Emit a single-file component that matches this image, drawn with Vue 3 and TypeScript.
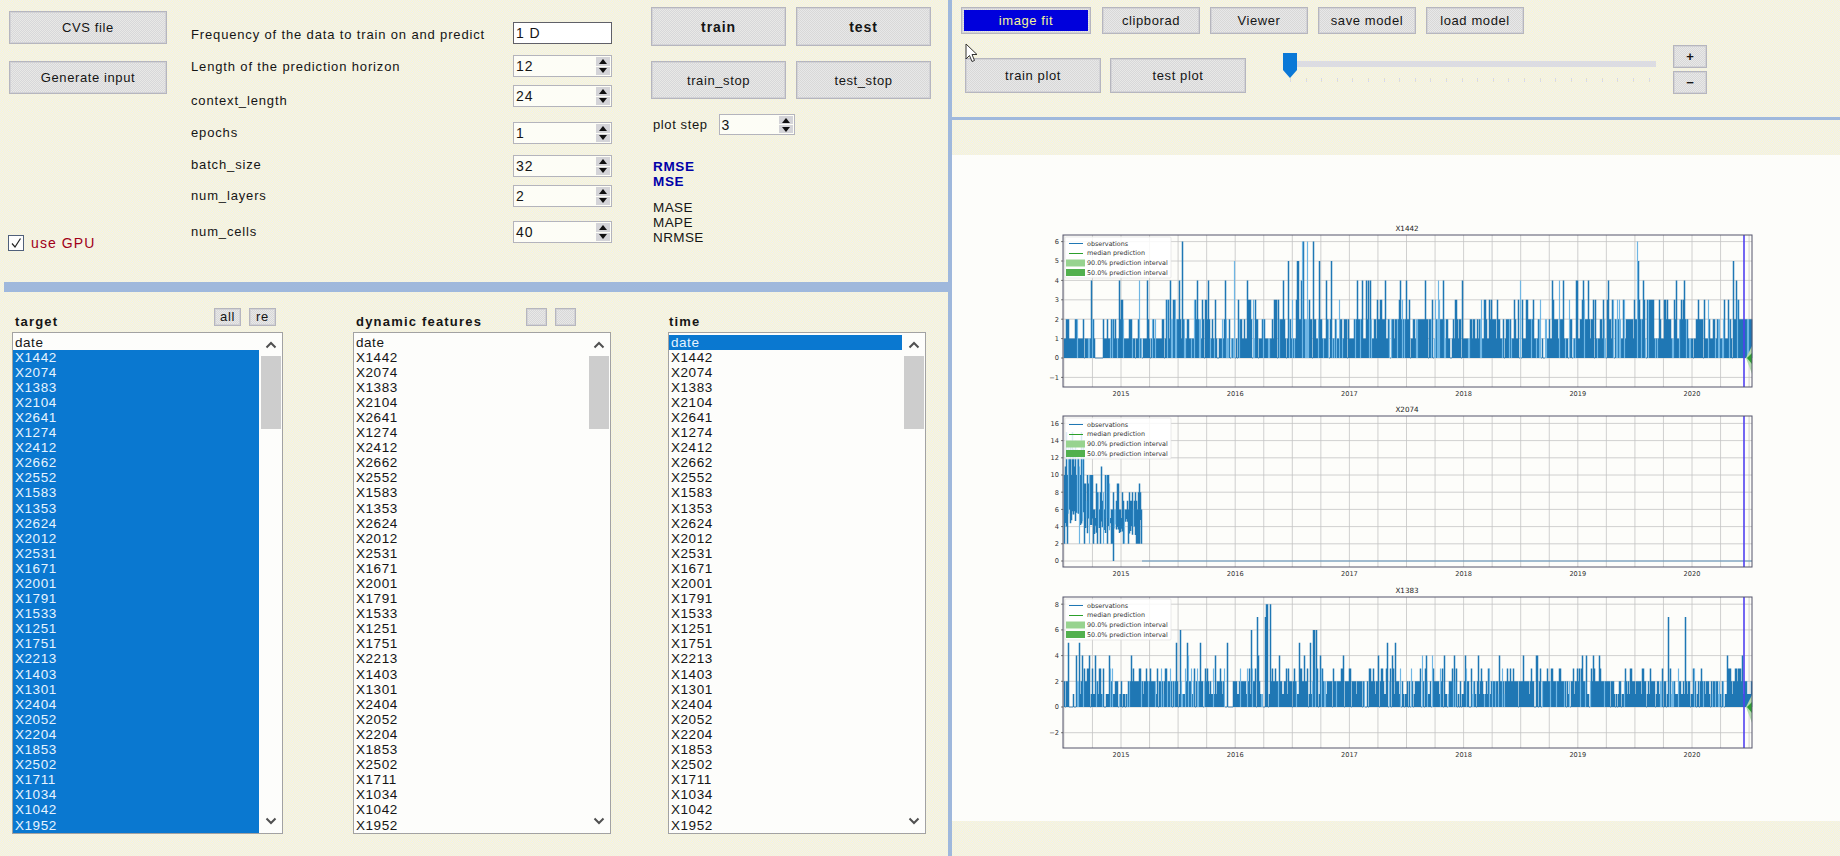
<script setup lang="ts">
interface Param { label: string; value: string; height: number; offset: number; spin: boolean }
const params: Param[] = [
  { label: 'Frequency of the data to train on and predict', value: '1 D', height: 33, offset: 5, spin: false },
  { label: 'Length of the prediction horizon', value: '12', height: 30, offset: 4, spin: true },
  { label: 'context_length', value: '24', height: 37, offset: 8, spin: true },
  { label: 'epochs', value: '1', height: 33, offset: 3, spin: true },
  { label: 'batch_size', value: '32', height: 30, offset: 2, spin: true },
  { label: 'num_layers', value: '2', height: 36, offset: 3, spin: true },
  { label: 'num_cells', value: '40', height: 22, offset: 3, spin: true },
]
const names = ['date','X1442','X2074','X1383','X2104','X2641','X1274','X2412','X2662','X2552','X1583','X1353','X2624','X2012','X2531','X1671','X2001','X1791','X1533','X1251','X1751','X2213','X1403','X1301','X2404','X2052','X2204','X1853','X2502','X1711','X1034','X1042','X1952']
const lists = [
  { key: 'target', title: 'target', cls: 'col-target', selected: names.slice(1), heads: ['all', 're'] },
  { key: 'dyn', title: 'dynamic features', cls: 'col-dyn', selected: [] as string[], heads: ['', ''] },
  { key: 'time', title: 'time', cls: 'col-time', selected: ['date'], heads: [] as string[] },
]

function rng(seed: number) {
  let a = seed
  return () => {
    a |= 0; a = (a + 0x6d2b79f5) | 0
    let t = Math.imul(a ^ (a >>> 15), 1 | a)
    t = (t + Math.imul(t ^ (t >>> 7), 61 | t)) ^ t
    return ((t ^ (t >>> 14)) >>> 0) / 4294967296
  }
}
const X0 = 1063, X1 = 1752, BLUE = 1744
const gridX: number[] = []
for (let x = 1121 - 28.55 * 2; x < X1; x += 28.55) if (x > X0) gridX.push(x)
const years = [2015, 2016, 2017, 2018, 2019, 2020].map((y, i) => ({ y, x: 1121 + i * 114.2 }))

interface Chart { title: string; top: number; bottom: number; ticks: { v: number; y: number }[]; zero: number; unit: number; dark: string; light: string; gaps: string; fan: string; fanB: string }
function build(title: string, top: number, bottom: number, zero: number, unit: number, tv: number[], values: (x: number, r: () => number) => number, seed: number, floor?: (x: number, r: () => number) => number): Chart {
  const r = rng(seed)
  let dark = '', light = '', gaps = ''
  let prev = 0
  for (let x = X0 + 1; x < X1; x++) {
    let v = values(x, r)
    if (!floor && v > 0) {
      if (v < 2 && prev >= 2 && r() < 0.55) v = 2
      else if (v < 3 && prev >= 3 && r() < 0.3) v = 3
    }
    prev = v
    const y = (zero - v * unit).toFixed(1)
    const lo = floor ? floor(x, r) : 0
    const seg = `M${x + 0.5} ${(zero - lo * unit).toFixed(1)}V${y}`
    if (v <= 0) gaps += `M${x} ${zero}H${x + 1}`
    else if (r() < 0.16) light += seg
    else dark += seg
  }
  const fan = `M${BLUE + 2} ${zero}L${X1} ${zero - 12}V${zero + 16}Z`
  const fanB = `M${BLUE + 3} ${zero}L${X1} ${zero - 5}V${zero + 6}Z`
  return { title, top, bottom, zero, unit, dark, light, gaps, fan, fanB, ticks: tv.map(v => ({ v, y: zero - v * unit })) }
}
function level(r: () => number, env: number) {
  const p = r()
  if (p < 0.07) return 0
  if (p < 1 - 0.4 * env) return 1
  if (p < 1 - 0.13 * env) return 2
  if (p < 1 - 0.045 * env) return 3
  return 4
}
const peaks1: Record<number, number> = { 1182: 6, 1302: 6, 1303: 6, 1307: 6, 1313: 6, 1637: 6, 1234: 5, 1288: 5, 1297: 5, 1298: 5, 1319: 5, 1331: 5, 1733: 5, 1638: 5 }
const c1 = build('X1442', 235, 387, 358, 19.4, [-1, 0, 1, 2, 3, 4, 5, 6], (x, r) => {
  if (peaks1[x]) return peaks1[x]
  if (x >= 1095 && x <= 1102) return 0
  return Math.min(4, level(r, x > 1165 ? 1.1 : 0.6))
}, 11)
const c2 = build('X2074', 416, 567, 561, 8.6, [0, 2, 4, 6, 8, 10, 12, 14, 16], (x, r) => {
  if (x > 1141) return 0
  const base = x < 1085 ? 9 : 5
  const top = x < 1085 ? 15 : x < 1110 ? 11.5 : 9.5
  return Math.round(base + r() * (top - base))
}, 23, (x, r) => {
  if (x > 1141) return 0
  const p = r()
  if (p < 0.05) return 0
  if (p < 0.2) return 2
  return x < 1085 ? 4 + r() * 2 : 3 + r() * 2
})
const peaks3: Record<number, number> = { 1266: 8, 1267: 8, 1270: 8, 1257: 7, 1265: 7, 1180: 6, 1251: 6, 1313: 6, 1314: 6, 1316: 6, 1668: 7, 1685: 7, 1068: 5, 1079: 5, 1176: 5, 1187: 5, 1200: 5, 1227: 5, 1299: 5, 1310: 5, 1387: 5, 1395: 5 }
const c3 = build('X1383', 597, 748, 707, 12.85, [-2, 0, 2, 4, 6, 8], (x, r) => {
  if (peaks3[x]) return peaks3[x]
  if (x >= 1225 && x <= 1232) return 0
  if (x >= 1069 && x <= 1075) return r() < 0.3 ? 1 : 0
  const p = r()
  if (p < 0.1) return 0
  if (p < 0.42) return 1
  if (p < 0.8) return 2
  if (p < 0.95) return 3
  return 4
}, 37)
const charts = [c1, c2, c3]
const legendRows = ['observations', 'median prediction', '90.0% prediction interval', '50.0% prediction interval']
const ticks = Array.from({ length: 24 }, (_, i) => i)
</script>

<template>
  <div class="app">
    <section class="left">
      <div class="left-top">
        <div class="file-col">
          <button class="btn file-btn">CVS file</button>
          <button class="btn file-btn">Generate input</button>
          <label class="gpu"><span class="check"><svg width="12" height="12" viewBox="0 0 12 12"><path d="M2 6.5 L5 10 L10.5 1.5" fill="none" stroke="#222" stroke-width="1.2"/></svg></span>use GPU</label>
        </div>
        <div class="params">
          <template v-for="p in params" :key="p.label">
            <div class="param-label" :style="{ marginTop: p.offset + 'px' }">{{ p.label }}</div>
            <div class="param-cell" :style="{ height: p.height + 'px' }">
              <div class="field" :class="{ plain: !p.spin }">
                <span class="field-text">{{ p.value }}</span>
                <span v-if="p.spin" class="spin">
                  <i class="sb"><b class="up"></b></i>
                  <i class="sb"><b class="down"></b></i>
                </span>
              </div>
            </div>
          </template>
        </div>
        <div class="run-col">
          <div class="run-grid">
            <button class="btn big strong">train</button>
            <button class="btn big strong">test</button>
            <button class="btn big">train_stop</button>
            <button class="btn big">test_stop</button>
          </div>
          <div class="plot-step">
            <span>plot step</span>
            <div class="field small">
              <span class="field-text">3</span>
              <span class="spin"><i class="sb"><b class="up"></b></i><i class="sb"><b class="down"></b></i></span>
            </div>
          </div>
          <div class="metrics blue"><div>RMSE</div><div>MSE</div></div>
          <div class="metrics"><div>MASE</div><div>MAPE</div><div>NRMSE</div></div>
        </div>
      </div>
      <div class="h-split"></div>
      <div class="left-bottom">
        <div v-for="l in lists" :key="l.key" class="list-col" :class="l.cls">
          <div class="list-head">
            <span class="list-title">{{ l.title }}</span>
            <span class="mini-group">
              <button v-for="(h, i) in l.heads" :key="i" class="btn mini">{{ h }}</button>
            </span>
          </div>
          <div class="listbox">
            <div class="rows">
              <div v-for="n in names" :key="n" class="row" :class="{ sel: l.selected.includes(n) }">{{ n }}</div>
            </div>
            <div class="scroll">
              <svg class="chev" width="12" height="8" viewBox="0 0 12 8"><path d="M1.5 6.5 L6 2 L10.5 6.5" fill="none" stroke="#505050" stroke-width="2"/></svg>
              <div class="thumb"></div>
              <svg class="chev down" width="12" height="8" viewBox="0 0 12 8"><path d="M1.5 1.5 L6 6 L10.5 1.5" fill="none" stroke="#505050" stroke-width="2"/></svg>
            </div>
          </div>
        </div>
      </div>
    </section>

    <div class="v-split"></div>

    <section class="right">
      <div class="toolbar">
        <div class="tool-row">
          <button class="btn t1 fit"><span>image fit</span></button>
          <button class="btn t1">clipborad</button>
          <button class="btn t1">Viewer</button>
          <button class="btn t1">save model</button>
          <button class="btn t1">load model</button>
        </div>
        <div class="tool-row2">
          <button class="btn plot">train plot</button>
          <button class="btn plot">test plot</button>
          <div class="slider">
            <div class="track"></div>
            <svg class="knob" width="14" height="25" viewBox="0 0 14 25"><path d="M0 0H14V17L7 25L0 17Z" fill="#0a78d7"/></svg>
            <div class="slider-ticks"><i v-for="t in ticks" :key="t"></i></div>
          </div>
          <div class="pm">
            <button class="btn pm-btn">+</button>
            <button class="btn pm-btn">−</button>
          </div>
        </div>
      </div>
      <div class="r-split"></div>
      <div class="pad-top"></div>
      <div class="canvas">
        <svg class="plots" width="888" height="666" viewBox="952 155 888 666">
          <g v-for="c in charts" :key="c.title">
            <text class="title" x="1407" :y="c.top - 4" text-anchor="middle">{{ c.title }}</text>
            <g class="grid">
              <line v-for="x in gridX" :key="x" :x1="x" :x2="x" :y1="c.top" :y2="c.bottom" />
              <line v-for="t in c.ticks" :key="t.v" :x1="X0" :x2="X1" :y1="t.y" :y2="t.y" />
            </g>
            <path :d="c.gaps" stroke="#5a8fb8" stroke-width="1" fill="none" />
            <path :d="c.dark" stroke="#1f77b4" stroke-width="1.5" fill="none" />
            <path :d="c.light" stroke="#6fb6e4" stroke-width="1.2" fill="none" />
            <template v-if="c.title !== 'X2074'">
              <path :d="c.fan" fill="#b4dcae" />
              <path :d="c.fanB" fill="#2f9f35" />
            </template>
            <line :x1="BLUE" :x2="BLUE" :y1="c.top" :y2="c.bottom" stroke="#5040f0" stroke-width="1.6" />
            <rect :x="X0" :y="c.top" :width="X1 - X0" :height="c.bottom - c.top" fill="none" stroke="#55556a" stroke-width="1" />
            <g v-for="t in c.ticks" :key="'t' + t.v">
              <line :x1="X0 - 2" :x2="X0" :y1="t.y" :y2="t.y" stroke="#444" stroke-width="0.7" />
              <text class="tick" :x="X0 - 4" :y="t.y + 2.4" text-anchor="end">{{ t.v < 0 ? '−' + -t.v : t.v }}</text>
            </g>
            <text v-for="y in years" :key="y.y" class="tick" :x="y.x" :y="c.bottom + 8.5" text-anchor="middle">{{ y.y }}</text>
            <g>
              <rect :x="X0 + 2" :y="c.top + 2" width="106" height="41" fill="#fff" fill-opacity="0.85" stroke="#ddd" stroke-width="0.6" rx="1" />
              <line :x1="X0 + 6" :x2="X0 + 20" :y1="c.top + 8.5" :y2="c.top + 8.5" stroke="#1f77b4" stroke-width="1" />
              <line :x1="X0 + 6" :x2="X0 + 20" :y1="c.top + 18.5" :y2="c.top + 18.5" stroke="#2ca02c" stroke-width="1" />
              <rect :x="X0 + 3" :y="c.top + 24.5" width="19" height="7" fill="#97d38f" />
              <rect :x="X0 + 3" :y="c.top + 34" width="19" height="7" fill="#52b04e" />
              <text v-for="(t, i) in legendRows" :key="t" class="legend" :x="X0 + 24" :y="c.top + 10.5 + i * 9.8">{{ t }}</text>
            </g>
          </g>
        </svg>
      </div>
      <div class="pad-bottom"></div>
    </section>

    <svg class="cursor" width="13" height="20" viewBox="0 0 13 20"><path d="M1 1V16L4.5 12.5L7 18.5L9.5 17.5L7 11.5H12Z" fill="#fff" stroke="#333" stroke-width="1"/></svg>
  </div>
</template>

<style>
html, body { margin: 0; padding: 0; background: #f5f4e6; overflow: hidden; }
</style>

<style scoped>
.app {
  position: relative;
  width: 1840px;
  height: 856px;
  display: flex;
  overflow: hidden;
  font-family: "Liberation Sans", Arial, sans-serif;
  font-size: 13px;
  letter-spacing: 0.6px;
  color: #151515;
  background-color: #f5f4e6;
  background-image: repeating-conic-gradient(#fcf8cc 0 25%, #ecedf6 0 50%);
  background-size: 2px 2px;
}
.left { width: 948px; display: flex; flex-direction: column; flex: none; }
.left-top { height: 282px; display: flex; flex: none; }
.file-col { width: 158px; margin-left: 9px; padding: 11px 0 31px; display: flex; flex-direction: column; align-items: flex-start; box-sizing: border-box; }
.btn {
  font: inherit;
  letter-spacing: inherit;
  color: #151515;
  padding: 0;
  box-sizing: border-box;
  border: 1px solid #b6b6be;
  background-color: #e0e0e0;
  background-image: repeating-conic-gradient(#d8d8d8 0 25%, #e8e8e8 0 50%);
  background-size: 2px 2px;
  box-shadow: inset 0 0 0 1px #d2d2d6;
}
.file-btn { width: 158px; height: 33px; margin-bottom: 17px; }
.gpu { margin-top: auto; margin-left: -1px; display: flex; align-items: center; gap: 7px; color: #a00018; font-size: 14px; letter-spacing: 1.1px; }
.check { width: 16px; height: 16px; box-sizing: border-box; border: 1px solid #50607a; background: #fdfdfd; display: flex; align-items: center; justify-content: center; }
.params { margin-left: 24px; width: 421px; padding-top: 22px; display: grid; grid-template-columns: 322px 99px; align-content: start; flex: none; }
.param-label { line-height: 16px; white-space: nowrap; letter-spacing: 0.85px; }
.field { position: relative; height: 22px; box-sizing: border-box; border: 1px solid #b4b4bc; background: #fdfdf6; display: flex; align-items: center; }
.field.plain { border-color: #606068; background: #fff; }
.field-text { padding-left: 2px; font-size: 14px; letter-spacing: 0.9px; line-height: 16px; }
.spin { position: absolute; right: 1px; top: 1px; bottom: 1px; width: 14px; display: flex; flex-direction: column; gap: 1px; }
.sb { flex: 1; background: #d4d4d8; display: flex; align-items: center; justify-content: center; }
.sb b { width: 0; height: 0; border-left: 4px solid transparent; border-right: 4px solid transparent; }
.sb b.up { border-bottom: 5px solid #111; }
.sb b.down { border-top: 5px solid #111; }
.run-col { margin-left: 39px; padding-top: 7px; width: 280px; flex: none; }
.run-grid { display: grid; grid-template-columns: 135px 135px; grid-template-rows: 39px 38px; column-gap: 10px; row-gap: 15px; }
.big { width: 135px; }
.strong { font-weight: bold; font-size: 14px; letter-spacing: 0.9px; }
.plot-step { margin-top: 15px; margin-left: 2px; display: flex; align-items: center; gap: 11px; }
.field.small { width: 76px; height: 21px; }
.metrics { margin-left: 2px; line-height: 15.3px; font-size: 13.5px; letter-spacing: 0.4px; }
.metrics.blue { margin-top: 24px; margin-bottom: 10px; color: #0000a8; font-weight: bold; letter-spacing: 0.65px; }
.h-split { height: 10px; margin-left: 4px; background: #9fb8dc; flex: none; }
.left-bottom { padding: 16px 0 0 12px; display: flex; }
.list-col { flex: none; }
.col-target { width: 271px; }
.col-dyn { width: 258px; margin-left: 70px; }
.col-time { width: 258px; margin-left: 57px; }
.list-head { height: 24px; display: flex; justify-content: space-between; align-items: flex-start; padding-left: 3px; }
.col-time .list-head { padding-left: 1px; }
.list-title { font-weight: bold; letter-spacing: 1.2px; line-height: 28px; white-space: nowrap; }
.mini-group { display: flex; gap: 8px; padding-right: 7px; }
.mini { width: 27px; height: 18px; font-size: 13px; line-height: 14px; }
.col-dyn .mini-group { padding-right: 35px; }
.col-dyn .mini { width: 21px; }
.listbox { height: 502px; box-sizing: border-box; border: 1px solid #a2a2a2; background: #fdfdfb; display: flex; overflow: hidden; }
.rows { flex: 1; min-width: 0; padding-top: 1.5px; overflow: hidden; }
.row { height: 15.1px; line-height: 15.1px; padding-left: 2px; font-size: 13.5px; letter-spacing: 0.55px; white-space: nowrap; }
.row.sel { background: #0a78d0; color: #e6f4ff; }
.scroll { width: 21px; margin-left: 2px; position: relative; flex: none; }
.thumb { position: absolute; left: 0; right: 1px; top: 23px; height: 73px; background: #cdcdcd; }
.chev { position: absolute; left: 4px; top: 8px; }
.chev.down { top: auto; bottom: 8px; }
.v-split { width: 4px; background: #9fb8dc; flex: none; }
.right { width: 888px; display: flex; flex-direction: column; flex: none; }
.toolbar { height: 117px; padding: 7px 0 0 9px; box-sizing: border-box; flex: none; }
.tool-row { display: flex; gap: 10px; }
.t1 { height: 27px; width: 98px; }
.fit { width: 130px; padding: 2px; margin-right: 1px; }
.fit span { display: flex; align-items: center; justify-content: center; height: 100%; background: #0000dc; color: #f4f49a; }
.tool-row2 { display: flex; align-items: flex-start; margin-top: 11px; padding-left: 4px; }
.plot { width: 136px; height: 35px; margin-top: 13px; margin-right: 9px; }
.slider { position: relative; width: 373px; height: 40px; margin-left: 28px; margin-top: 8px; }
.track { position: absolute; left: 14px; right: 0; top: 8px; height: 6px; background: #dcdce2; }
.knob { position: absolute; left: 0; top: 0; }
.slider-ticks { position: absolute; left: 7px; right: 6px; top: 25px; display: flex; justify-content: space-between; }
.slider-ticks i { width: 1px; height: 4px; background: #dcdcdc; }
.pm { margin-left: 17px; display: flex; flex-direction: column; gap: 3px; }
.pm-btn { width: 34px; height: 23px; font-weight: bold; font-size: 13px; letter-spacing: 0; }
.r-split { height: 3px; background: #9fb8dc; flex: none; }
.pad-top { height: 35px; flex: none; }
.canvas { height: 666px; background: #fdfdfa; flex: none; }
.plots { display: block; font-family: "DejaVu Sans", sans-serif; letter-spacing: 0; }
.title { font-size: 7.2px; fill: #222; }
.tick { font-size: 6.6px; fill: #333; }
.legend { font-size: 6.4px; fill: #333; }
.grid line { stroke: #c4c4c4; stroke-width: 0.8; }
.cursor { position: absolute; left: 965px; top: 43px; }
</style>
